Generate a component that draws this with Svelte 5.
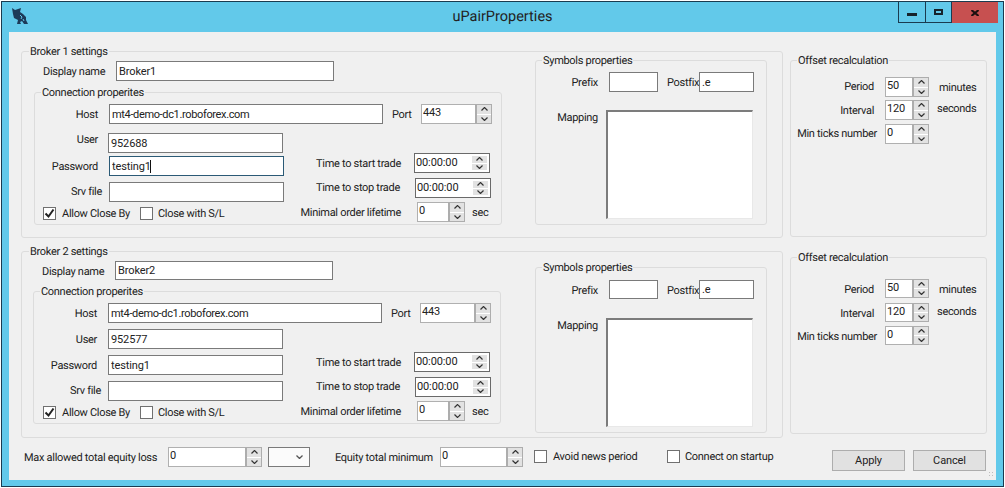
<script>
	const brokers = [
		{ id: 'b1', title: 'Broker 1 settings', name: 'Broker1', user: '952688' },
		{ id: 'b2', title: 'Broker 2 settings', name: 'Broker2', user: '952577' }
	];
</script>

{#snippet tb(value, cls)}
	<input class="tb {cls}" type="text" readonly {value} />
{/snippet}

{#snippet spin(value, cls)}
	<div class="spin {cls}">
		<input type="text" readonly {value} />
		<div class="btns">
			<span><svg viewBox="0 0 7 4" width="7" height="4"><path d="M.5 3.5l3-3 3 3" /></svg></span>
			<span><svg viewBox="0 0 7 4" width="7" height="4"><path d="M.5.5l3 3 3-3" /></svg></span>
		</div>
	</div>
{/snippet}

{#snippet check(text, checked, cls)}
	<div class="check {cls}">
		<span class="box">
			{#if checked}
				<svg viewBox="0 0 11 11" width="11" height="11"><path d="M1.5 5.5l3 3 5-7" /></svg>
			{/if}
		</span>
		<span>{text}</span>
	</div>
{/snippet}

{#snippet broker(b)}
	<div class="row-group {b.id}">
		<fieldset class="group broker">
			<legend>{b.title}</legend>
			<div class="broker-body">
				<div class="left">
					<div class="row display">
						<span class="lbl l-display">Display name</span>
						{@render tb(b.name, 'i-display')}
					</div>
					<fieldset class="group conn">
						<legend>Connection properites</legend>
						<div class="row host">
							<span class="lbl l-host">Host</span>
							{@render tb('mt4-demo-dc1.roboforex.com', 'i-host')}
							<span class="lbl l-port">Port</span>
							{@render spin('443', 'num s-port')}
						</div>
						<div class="conn-body">
							<div class="creds">
								<div class="row user">
									<span class="lbl l-host l-user">User</span>
									{@render tb(b.user, 'i-cred i-user')}
								</div>
								<div class="row pass">
									<span class="lbl l-host">Password</span>
									<div class="caret-wrap" class:focused={b.id === 'b1'}>
										{@render tb('testing1', 'i-cred')}
									</div>
								</div>
								<div class="row srv">
									<span class="lbl l-srv">Srv file</span>
									{@render tb('', 'i-cred')}
								</div>
								<div class="checks">
									{@render check('Allow Close By', true, 'c-allow')}
									{@render check('Close with S/L', false, 'c-close')}
								</div>
							</div>
							<div class="times">
								<div class="row t-start">
									<span class="lbl l-start">Time to start trade</span>
									{@render spin('00:00:00', 'time')}
								</div>
								<div class="row t-stop">
									<span class="lbl l-stop">Time to stop trade</span>
									{@render spin('00:00:00', 'time')}
								</div>
								<div class="row t-life">
									<span class="lbl l-life">Minimal order lifetime</span>
									{@render spin('0', 'num s-life')}
									<span class="sec">sec</span>
								</div>
							</div>
						</div>
					</fieldset>
				</div>
				<fieldset class="group symbols">
					<legend>Symbols properties</legend>
					<div class="row affix">
						<span class="lbl l-prefix">Prefix</span>
						{@render tb('', 'i-prefix')}
						<span class="lbl l-postfix">Postfix</span>
						{@render tb('.e', 'i-postfix')}
					</div>
					<div class="mapping">
						<span class="lbl l-mapping">Mapping</span>
						<textarea readonly></textarea>
					</div>
				</fieldset>
			</div>
		</fieldset>
		<fieldset class="group offset">
			<legend>Offset recalculation</legend>
			<div class="row o-period">
				<span class="lbl l-offset">Period</span>
				{@render spin('50', 'num s-offset')}
				<span class="unit minutes">minutes</span>
			</div>
			<div class="row o-interval">
				<span class="lbl l-offset">Interval</span>
				{@render spin('120', 'num s-offset')}
				<span class="unit seconds">seconds</span>
			</div>
			<div class="row o-ticks">
				<span class="lbl l-offset l-ticks">Min ticks number</span>
				{@render spin('0', 'num s-offset')}
			</div>
		</fieldset>
	</div>
{/snippet}

<div class="window">
	<header class="titlebar">
		<svg class="app-icon" viewBox="0 0 16 16" width="16" height="16">
			<path d="M0 0l3 2 3-1 3-1-1 4 3 2 3 3 0 3 2 4h-4l-2-3-2 1 1 2H5l1-4-4-2-1-4z" />
			<path class="cut" d="M8 7l2 2-1 2M11 11l1 2" />
		</svg>
		<h1>uPairProperties</h1>
		<div class="controls">
			<button class="min" aria-label="Minimize"><i></i></button>
			<button class="max" aria-label="Maximize"><i></i></button>
			<button class="close" aria-label="Close">
				<svg viewBox="0 0 8 6" width="8" height="6"><path d="M.5 0l7 6M7.5 0l-7 6" /></svg>
			</button>
		</div>
	</header>
	<main class="client">
		{#each brokers as b}
			{@render broker(b)}
		{/each}
		<footer class="footer">
			<span class="lbl f-max">Max allowed total equity loss</span>
			{@render spin('0', 'num s-max')}
			<div class="combo">
				<svg viewBox="0 0 7 4" width="7" height="4"><path d="M.5.5l3 3 3-3" /></svg>
			</div>
			<span class="lbl f-min">Equity total minimum</span>
			{@render spin('0', 'num s-min')}
			{@render check('Avoid news period', false, 'c-news')}
			{@render check('Connect on startup', false, 'c-startup')}
			<button class="btn apply">Apply</button>
			<button class="btn">Cancel</button>
			<span class="grip"></span>
		</footer>
	</main>
</div>

<style>
	:global(body) {
		background: #fff;
	}

	.window {
		width: 1003px;
		height: 486px;
		margin: 1px 0 0 1px;
		box-sizing: border-box;
		border: 1px solid #1a3b50;
		background: #62c9ea;
		padding: 0 7px 6px 7px;
		display: flex;
		flex-direction: column;
		font: 11px/14px Roboto, sans-serif;
		text-rendering: geometricPrecision;
		letter-spacing: -0.3px;
		color: #222;
		overflow: hidden;
	}

	.titlebar {
		height: 30px;
		flex: none;
		margin: 0 -7px;
		display: grid;
		grid-template-columns: 1fr auto 1fr;
		position: relative;
	}

	.app-icon {
		margin: 6px 0 0 10px;
	}
	.app-icon path {
		fill: #1d3a58;
	}
	.app-icon .cut {
		fill: none;
		stroke: #62c9ea;
	}

	h1 {
		margin: 6px 0 0;
		font: 400 14.5px/18px Roboto, sans-serif;
		letter-spacing: 0;
		color: #222;
	}

	.controls {
		justify-self: end;
		display: flex;
		height: 21px;
		margin-right: 5px;
	}
	.controls button {
		padding: 0;
		background: none;
		border: 1px solid #1a3b50;
		border-top: 0;
		display: flex;
		align-items: center;
		justify-content: center;
	}
	.min {
		width: 28px;
	}
	.min i {
		width: 10px;
		height: 3px;
		margin-top: 5px;
		background: #16232c;
	}
	.max {
		width: 27px;
		margin-left: -1px;
	}
	.max i {
		width: 9px;
		height: 6px;
		box-sizing: border-box;
		border: 2px solid #16232c;
		margin-top: -1px;
	}
	.controls .close {
		width: 46px;
		background: #c75050;
		border: 0;
	}
	.close path {
		stroke: #1c1010;
		stroke-width: 2;
		fill: none;
	}

	.client {
		flex: 1;
		background: #f0f0f0;
		padding: 12px 0 0 12px;
		position: relative;
	}

	.group {
		margin: 0;
		padding: 0;
		border: 1px solid #dcdcdc;
		border-radius: 3px;
		box-sizing: border-box;
		min-width: 0;
	}
	legend {
		margin-left: 6px;
		padding: 0 1px;
		line-height: 16px;
		height: 14px;
	}
	.broker > legend {
		margin-left: 7px;
	}

	.row-group {
		display: flex;
		gap: 7px;
		align-items: flex-start;
	}
	.row-group.b2 {
		margin-top: 6px;
	}

	.broker {
		width: 762px;
		height: 194px;
	}
	.broker-body {
		display: flex;
	}
	.left {
		width: 500px;
		padding-left: 12px;
		box-sizing: border-box;
	}
	.b2 .left {
		padding-left: 11px;
		margin-right: 1px;
	}

	.row {
		display: flex;
		align-items: center;
	}
	.lbl {
		flex: none;
		text-align: right;
		white-space: nowrap;
		padding-top: 2px;
	}

	.tb {
		box-sizing: border-box;
		height: 20px;
		flex: none;
		border: 1px solid #7a7a7a;
		border-radius: 0;
		outline: 0;
		background: #fff;
		padding: 0 2px;
		font: inherit;
		letter-spacing: -0.12px;
		color: inherit;
	}

	.display {
		margin-top: 3px;
	}
	.l-display {
		width: 62px;
		margin-left: 9px;
		margin-right: 11px;
		text-align: left;
	}
	.i-display {
		width: 218px;
	}
	.b2 .display .tb {
		height: 19px;
	}

	.conn {
		width: 468px;
		height: 140px;
		margin-top: 4px;
	}
	.host {
		margin-top: 5px;
	}
	.l-host {
		width: 63px;
		margin-right: 11px;
	}
	.i-host {
		width: 274px;
		letter-spacing: -0.35px;
	}
	.l-port {
		width: 18px;
		margin: 0 11px 0 9px;
	}
	.conn-body {
		display: flex;
	}
	.creds {
		width: 250px;
		flex: none;
	}
	.b2 .creds {
		width: 251px;
	}
	.i-cred {
		width: 175px;
	}
	.user {
		margin-top: 9px;
	}
	.b1 .user .l-user {
		align-self: flex-start;
		padding-top: 0;
		margin-right: 10px;
	}
	.pass {
		margin-top: 3px;
	}
	.srv {
		margin-top: 6px;
	}
	.b2 .user,
	.b2 .pass,
	.b2 .srv {
		margin-top: 6px;
	}
	.l-srv {
		width: 67px;
		margin-right: 7px;
		margin-bottom: 2px;
	}
	.checks {
		display: flex;
		margin-top: 5px;
		padding-left: 8px;
	}
	.b2 .checks {
		padding-left: 9px;
	}
	.check {
		display: flex;
		align-items: center;
		gap: 6px;
		height: 13px;
		flex: none;
		white-space: nowrap;
	}
	.box {
		width: 13px;
		height: 13px;
		box-sizing: border-box;
		border: 1px solid #707070;
		background: #fff;
		display: flex;
		flex: none;
	}
	.box svg {
		display: block;
	}
	.box path {
		fill: none;
		stroke: #222;
		stroke-width: 2;
	}
	.c-allow {
		width: 97px;
	}
	.c-close {
		gap: 5px;
	}

	.caret-wrap {
		position: relative;
		display: flex;
	}
	.b1 .caret-wrap .tb {
		border-color: #2b5a76;
	}
	.focused::after {
		content: '';
		position: absolute;
		left: 41px;
		top: 4px;
		width: 1px;
		height: 13px;
		background: #111;
	}

	.times {
		flex: none;
	}
	.t-start {
		margin-top: 29px;
	}
	.t-stop {
		margin-top: 5px;
	}
	.t-life {
		margin-top: 4px;
	}
	.l-start {
		width: 116px;
		margin-right: 13px;
	}
	.l-stop {
		width: 115px;
		margin-right: 15px;
		margin-bottom: 2px;
	}
	.l-life {
		width: 116px;
		margin-right: 16px;
	}
	.sec {
		margin-left: 7px;
		margin-top: 2px;
	}

	/* spinners */
	.spin {
		display: flex;
		flex: none;
		box-sizing: border-box;
		height: 20px;
		background: #fff;
		border: 1px solid #b0b0b0;
	}
	.b2 .offset .spin {
		height: 19px;
	}
	.spin input {
		flex: 1;
		min-width: 0;
		border: 0;
		outline: 0;
		padding: 0 0 2px 1px;
		background: none;
		font: inherit;
		letter-spacing: -0.12px;
		color: inherit;
	}
	.time input {
		padding: 0 0 0 1px;
	}
	.btns {
		flex: none;
		width: 16px;
		display: grid;
		grid-template-rows: 1fr 1fr;
		gap: 1px;
		background: #fff;
		box-sizing: border-box;
	}
	.btns span {
		background: #e2e2e2;
		display: flex;
		align-items: center;
		justify-content: center;
		min-height: 0;
	}
	.btns path {
		fill: none;
		stroke: #333;
		stroke-width: 1.2;
	}
	.num .btns {
		margin: -1px -1px -1px 0;
		width: 17px;
		border-style: solid;
		border-color: #adadad;
		border-width: 1px 1px 1px 2px;
	}
	.time {
		width: 76px;
		border-color: #6a6a6a;
	}
	.time .btns {
		margin: 2px;
		width: 15px;
	}
	.s-port {
		width: 71px;
	}
	.s-life {
		width: 48px;
	}

	/* symbols */
	.symbols {
		width: 232px;
		height: 172px;
		margin: -5px 0 0 13px;
	}
	.b2 .symbols {
		height: 173px;
		margin-top: 2px;
		margin-left: 12px;
	}
	.affix {
		margin-top: 5px;
	}
	.b2 .affix {
		margin-top: 6px;
	}
	.l-prefix {
		width: 62px;
		margin-right: 11px;
	}
	.i-prefix {
		width: 49px;
	}
	.l-postfix {
		margin-left: 9px;
		width: 31px;
		margin-right: 1px;
	}
	.i-postfix {
		width: 55px;
	}
	.b2 .affix .tb {
		height: 19px;
	}
	.mapping {
		display: flex;
		align-items: flex-start;
		margin-top: 18px;
	}
	.b2 .mapping {
		margin-top: 19px;
	}
	.l-mapping {
		width: 62px;
		margin-right: 8px;
		padding-top: 1px;
	}
	textarea {
		width: 147px;
		height: 109px;
		box-sizing: border-box;
		padding: 0;
		resize: none;
		outline: 0;
		background: #fff;
		border-style: solid;
		border-width: 2px 1px 1px 2px;
		border-color: #7c7c7c #e8e8e8 #e8e8e8 #7c7c7c;
		border-radius: 0;
	}

	/* offset */
	.offset {
		width: 197px;
		height: 184px;
		margin-top: 9px;
	}
	.b2 .offset {
		margin-top: 6px;
	}
	.o-period {
		margin-top: 10px;
	}
	.o-interval {
		margin-top: 3px;
	}
	.o-ticks {
		margin-top: 4px;
	}
	.b2 .o-period {
		margin-top: 15px;
	}
	.b2 .o-interval {
		margin-top: 5px;
	}
	.l-offset {
		width: 83px;
		margin-right: 11px;
	}
	.l-ticks {
		margin-right: 8px;
		width: 86px;
	}
	.b1 .o-period .lbl,
	.b1 .o-ticks .lbl {
		padding-top: 0;
	}
	.s-offset {
		width: 44px;
	}
	.unit {
		flex: none;
	}
	.minutes {
		margin: 2px 0 0 10px;
	}
	.seconds {
		margin: 0 0 2px 8px;
	}

	/* bottom strip */
	.footer {
		display: flex;
		align-items: flex-start;
		margin-top: 9px;
		padding-left: 3px;
	}
	.footer .lbl {
		line-height: 18px;
		text-align: left;
	}
	.f-max {
		width: 133px;
		margin-right: 11px;
	}
	.s-max {
		width: 94px;
	}
	.combo {
		width: 42px;
		height: 20px;
		box-sizing: border-box;
		margin-left: 6px;
		border: 1px solid #7a7a7a;
		background: #fbfbfb;
		display: flex;
		align-items: center;
		justify-content: flex-end;
		padding-right: 6px;
	}
	.combo path {
		fill: none;
		stroke: #555;
		stroke-width: 1.3;
	}
	.f-min {
		width: 94px;
		margin: 0 11px 0 25px;
	}
	.s-min {
		width: 83px;
	}
	.c-news {
		margin: 3px 0 0 11px;
		width: 105px;
	}
	.c-startup {
		margin: 3px 0 0 28px;
		gap: 5px;
		width: 108px;
	}
	.btn {
		width: 73px;
		height: 21px;
		flex: none;
		margin: 3px 0 0 8px;
		padding: 1px 0 0;
		border: 1px solid #adadad;
		background: #e1e1e1;
		font: inherit;
		letter-spacing: -0.12px;
		color: inherit;
	}
	.apply {
		margin-left: 57px;
	}
	.grip {
		position: absolute;
		right: 1px;
		bottom: 2px;
		width: 7px;
		height: 7px;
		background: radial-gradient(circle, #bdbdbd 40%, transparent 45%) 0 0 / 3px 3px;
	}
</style>
